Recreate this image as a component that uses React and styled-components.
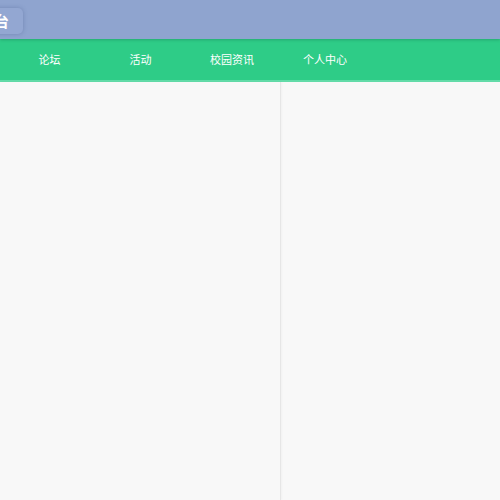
import React from "react";
import styled, { createGlobalStyle } from "styled-components";

const Global = createGlobalStyle`
  html, body { margin: 0; padding: 0; background: #f8f8f8; overflow: hidden; }
  body { font-family: "Noto Sans CJK SC", "Noto Sans", sans-serif; }
  #root { height: 100vh; }
`;

const Page = styled.div`
  display: flex;
  flex-direction: column;
  height: 100vh;
  overflow: hidden;
`;

const Header = styled.header`
  position: relative;
  z-index: 2;
  height: 39px;
  background: #8fa4cf;
  display: flex;
  align-items: center;
  box-shadow: 0 1px 3px rgba(0, 0, 0, 0.18);
`;

const BrandButton = styled.div`
  margin-left: -18px;
  margin-top: 2px;
  height: 26px;
  padding: 0 14px 0 12px;
  display: flex;
  align-items: center;
  border-radius: 5px;
  background: #93a7d2;
  box-shadow: 0 0 4px rgba(60, 80, 130, 0.35);
  color: #fff;
  font-size: 15px;
  font-weight: 700;
  line-height: 1;
`;

const Nav = styled.nav`
  height: 41px;
  background: #2ecc87;
  border-bottom: 2px solid #62dba8;
  display: flex;
  align-items: center;
  padding-left: 4px;
`;

const NavItem = styled.a`
  width: ${(p) => p.$w}px;
  text-align: center;
  color: #fff;
  font-size: 11px;
  font-weight: 400;
  text-decoration: none;
  line-height: 1;
`;

const Body = styled.main`
  flex: 1;
  display: flex;
  background: #f8f8f8;
`;

const LeftPane = styled.section`
  width: 280px;
  border-right: 1px solid #e6e6e6;
  box-shadow: 1px 0 2px rgba(0, 0, 0, 0.03);
`;

const RightPane = styled.section`
  flex: 1;
`;

const items = [
  { label: "论坛", w: 91 },
  { label: "活动", w: 91 },
  { label: "校园资讯", w: 92 },
  { label: "个人中心", w: 94 },
];

export default function App() {
  return (
    <Page>
      <Global />
      <Header>
        <BrandButton>台</BrandButton>
      </Header>
      <Nav>
        {items.map((it) => (
          <NavItem key={it.label} $w={it.w}>
            {it.label}
          </NavItem>
        ))}
      </Nav>
      <Body>
        <LeftPane />
        <RightPane />
      </Body>
    </Page>
  );
}
